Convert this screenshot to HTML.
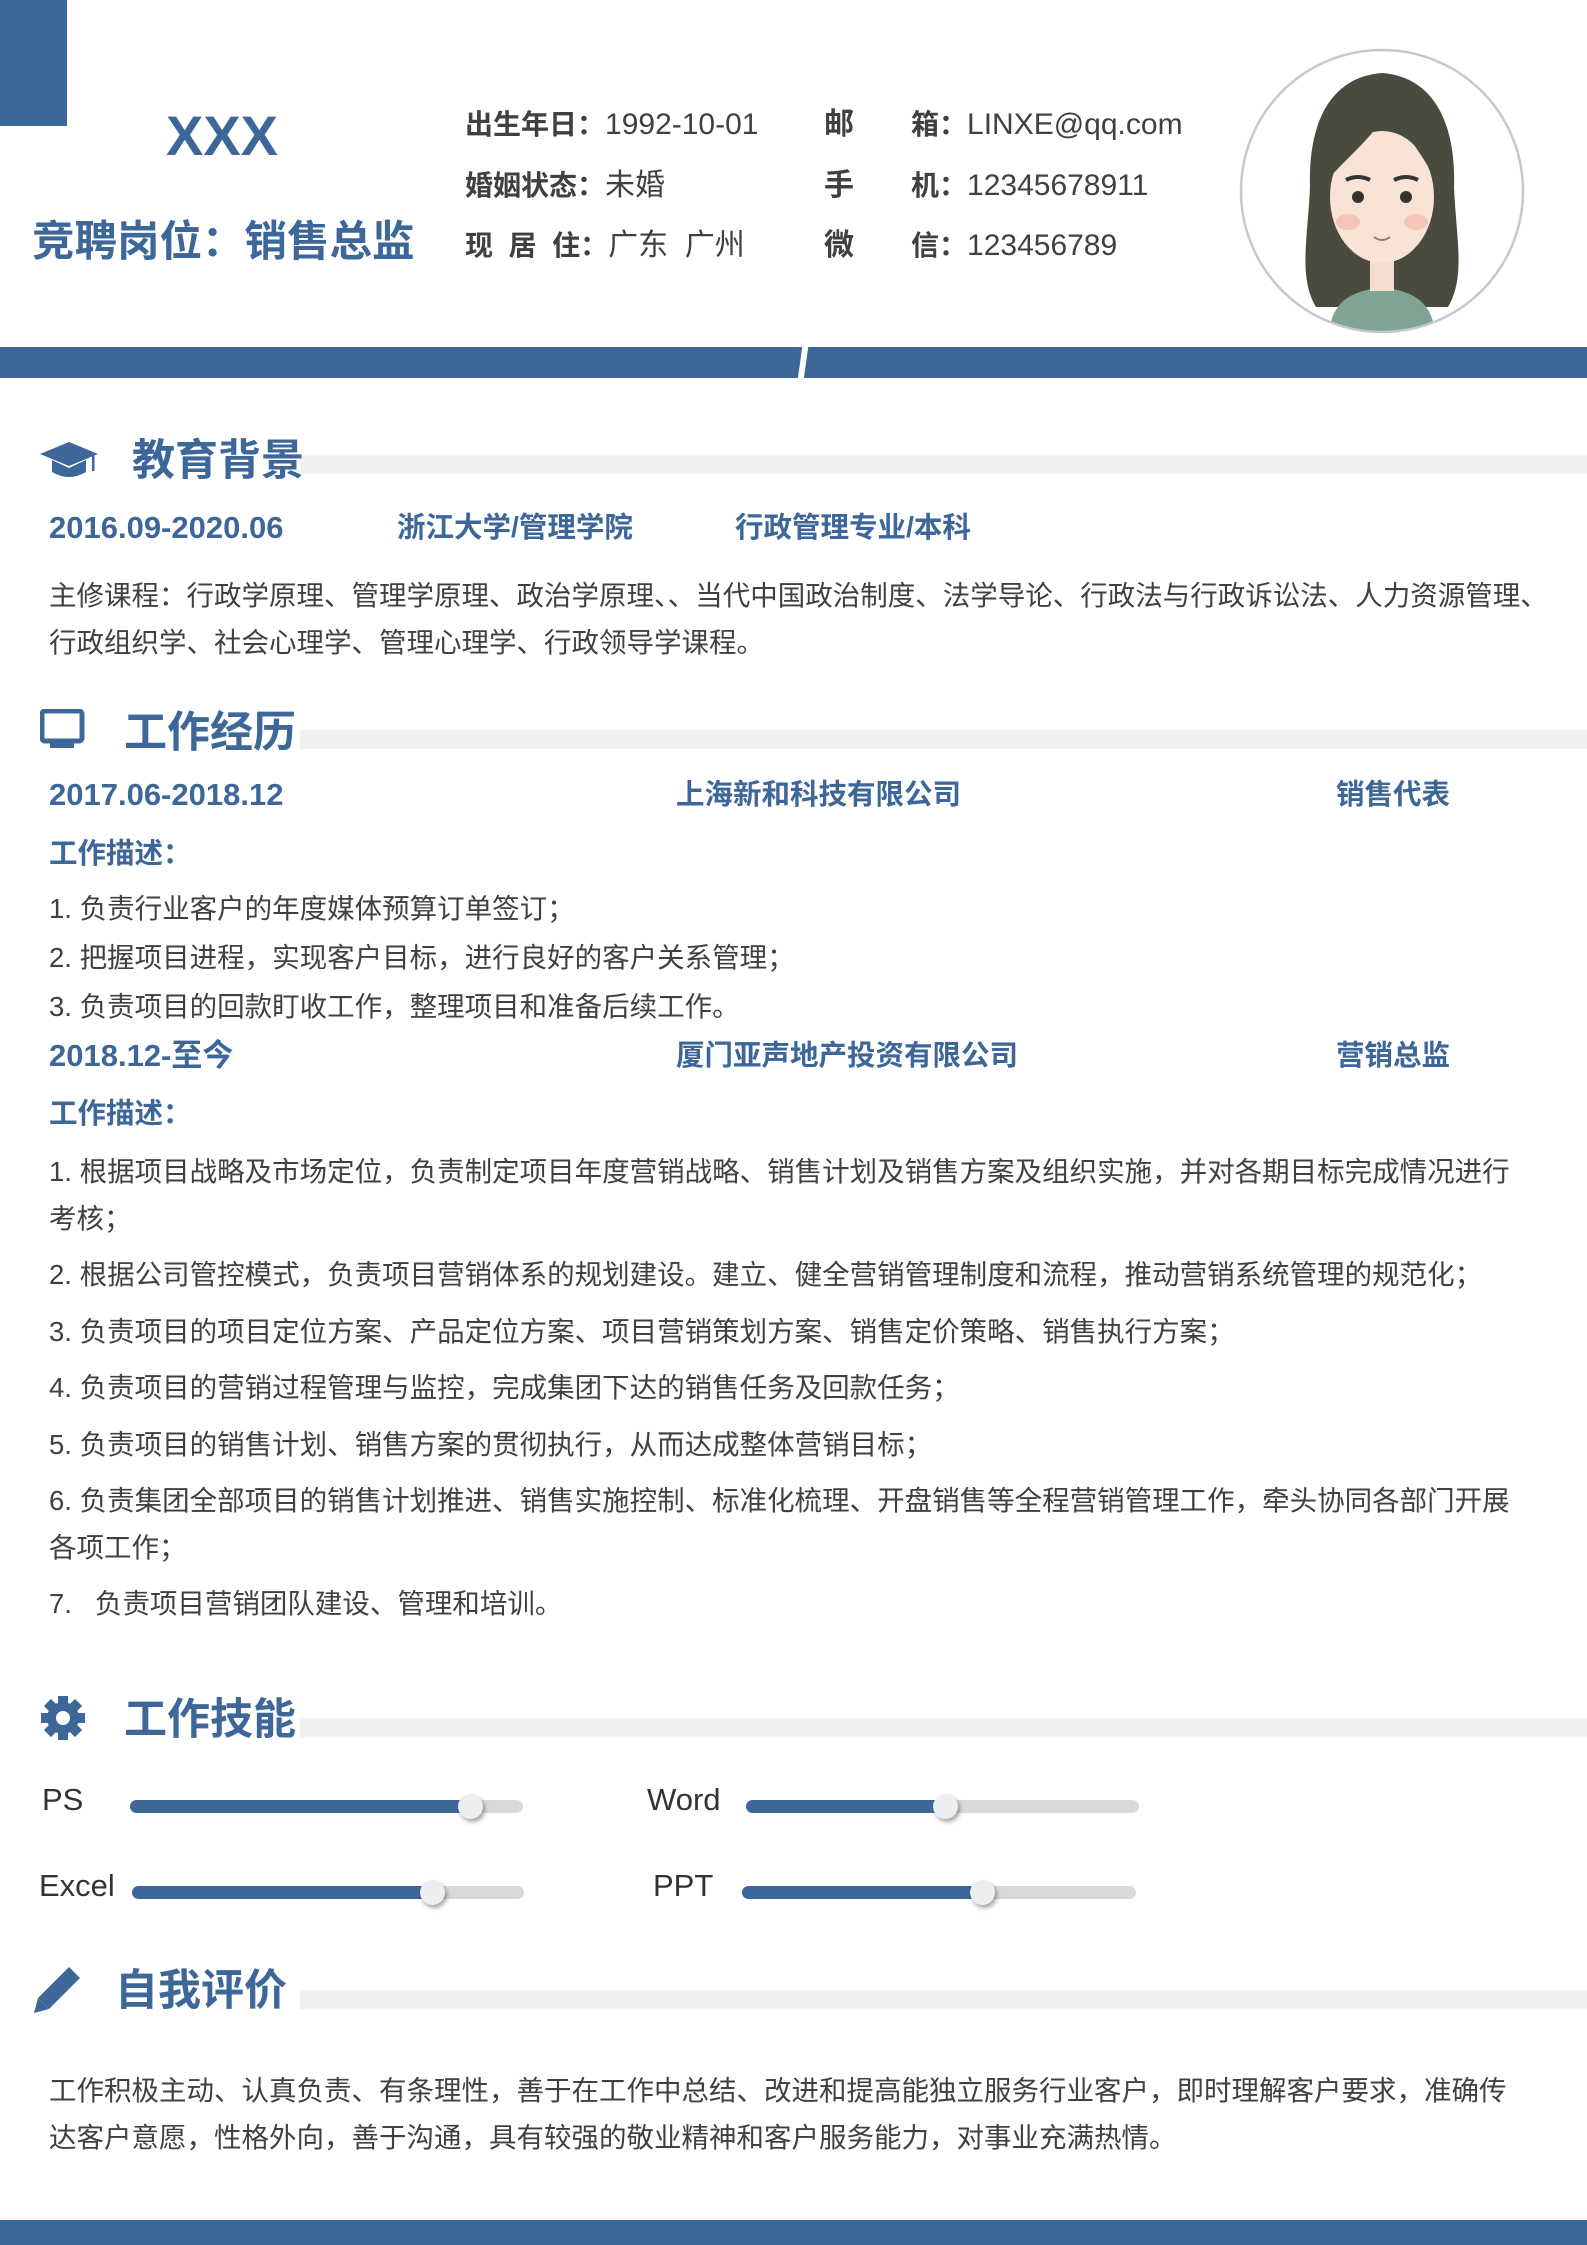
<!DOCTYPE html>
<html><head><meta charset="utf-8"><style>
*{margin:0;padding:0;box-sizing:border-box}
body{width:1587px;height:2245px;position:relative;background:#fff;font-family:"Liberation Sans","Noto Sans CJK SC",sans-serif;color:#404040;overflow:hidden}
.a{position:absolute;white-space:nowrap}
.b{color:#3e6799;font-weight:bold}
.lab{font-weight:bold;color:#404040;font-size:28px}
.info{font-size:30px;line-height:40px}
.ht{font-size:43px;line-height:56px;font-weight:bold;color:#3e6799}
.hb{position:absolute;left:300px;right:0;height:19px;background:#f0f0f0}
.row{font-size:28.5px;line-height:40px}
.d{font-size:31px}
.t{font-size:27.5px;line-height:40px}
.track{position:absolute;height:13px;border-radius:7px;background:#d9d9d9}
.fill{position:absolute;left:0;top:0;height:13px;border-radius:7px;background:#3e6799}
.knob{position:absolute;top:-6px;width:25px;height:25px;border-radius:50%;background:#eceef0;box-shadow:2px 3px 4px rgba(0,0,0,.35)}
.sk{font-size:31px;line-height:40px;color:#333}
</style></head><body>
<div class="a" style="left:0;top:0;width:67px;height:126px;background:#3e6799"></div>
<div class="a b" style="left:222px;top:106px;font-size:56px;line-height:60px;transform:translateX(-50%)">XXX</div>
<div class="a b" style="left:32px;top:218px;font-size:42.5px;line-height:50px">竞聘岗位：销售总监</div>

<div class="a info" style="left:465px;top:105px"><span class="lab">出生年日：</span>1992-10-01</div>
<div class="a info" style="left:465px;top:166px"><span class="lab">婚姻状态：</span>未婚</div>
<div class="a info" style="left:465px;top:226px"><span class="lab">现&nbsp;&nbsp;居&nbsp;&nbsp;住：</span>广东&nbsp;&nbsp;广州</div>
<div class="a info lab" style="left:824px;top:105px">邮</div>
<div class="a info lab" style="left:824px;top:166px">手</div>
<div class="a info lab" style="left:824px;top:226px">微</div>
<div class="a info" style="left:911px;top:105px"><span class="lab">箱：</span>LINXE@qq.com</div>
<div class="a info" style="left:911px;top:166px"><span class="lab">机：</span>12345678911</div>
<div class="a info" style="left:911px;top:226px"><span class="lab">信：</span>123456789</div>

<svg class="a" style="left:1238px;top:47px" width="288" height="288" viewBox="0 0 288 288">
<defs><clipPath id="c"><circle cx="144" cy="144" r="141"/></clipPath></defs>
<circle cx="144" cy="144" r="141" fill="#fff"/>
<g clip-path="url(#c)">
<path d="M144 26 C90 30 70 80 72 140 C70 190 60 230 78 260 L210 260 C228 230 218 190 216 140 C218 80 198 30 144 26Z" fill="#4a4a3e"/>
<path d="M90 300 C90 255 110 245 144 240 C178 245 198 255 198 300Z" fill="#7fa494"/>
<rect x="132" y="200" width="24" height="44" fill="#f5ddd0"/>
<ellipse cx="144" cy="150" rx="52" ry="66" fill="#f8e3d6"/>
<path d="M92 130 C100 80 130 62 150 60 C140 85 120 100 92 130Z" fill="#4a4a3e"/>
<path d="M196 130 C190 90 170 70 150 60 C165 85 180 100 196 130Z" fill="#4a4a3e"/>
<circle cx="120" cy="150" r="6" fill="#333"/><circle cx="168" cy="150" r="6" fill="#333"/>
<path d="M108 133 q12 -6 24 0 M156 133 q12 -6 24 0" stroke="#333" stroke-width="4" fill="none"/>
<ellipse cx="110" cy="175" rx="12" ry="8" fill="#f4b8b0" opacity=".7"/><ellipse cx="178" cy="175" rx="12" ry="8" fill="#f4b8b0" opacity=".7"/>
<path d="M136 190 q8 6 16 0" stroke="#b07060" stroke-width="2" fill="none"/>
</g>
<circle cx="144" cy="144" r="141" fill="none" stroke="#c8c8c8" stroke-width="2.5"/>
</svg>

<div class="a" style="left:0;top:347px;width:1587px;height:31px;background:#3e6799"></div>
<div class="a" style="left:800px;top:345px;width:6px;height:36px;background:#fff;transform:skewX(-8deg)"></div>

<div class="hb" style="top:455px"></div>
<svg class="a" style="left:40px;top:440px" width="58" height="40" viewBox="0 0 58 40"><path d="M29 2 L58 14 L29 26 L0 14Z" fill="#3e6799"/><path d="M12 20 L12 32 Q29 42 46 32 L46 20 L29 28Z" fill="#3e6799"/><rect x="52" y="15" width="2.5" height="16" fill="#3e6799"/></svg>
<div class="a ht" style="left:132px;top:433px">教育背景</div>
<div class="a b row d" style="left:49px;top:508px">2016.09-2020.06</div>
<div class="a b row" style="left:397px;top:508px">浙江大学/管理学院</div>
<div class="a b row" style="left:735px;top:508px">行政管理专业/本科</div>
<div class="a t" style="left:49px;top:576px">主修课程：行政学原理、管理学原理、政治学原理、、当代中国政治制度、法学导论、行政法与行政诉讼法、人力资源管理、</div>
<div class="a t" style="left:49px;top:623px">行政组织学、社会心理学、管理心理学、行政领导学课程。</div>

<div class="hb" style="top:730px"></div>
<svg class="a" style="left:40px;top:709px" width="46" height="42" viewBox="0 0 46 42"><rect x="2" y="2" width="40" height="30" rx="3" fill="none" stroke="#3e6799" stroke-width="5"/><rect x="10" y="34" width="24" height="5" fill="#3e6799"/></svg>
<div class="a ht" style="left:124px;top:705px">工作经历</div>
<div class="a b row d" style="left:49px;top:775px">2017.06-2018.12</div>
<div class="a b row" style="left:676px;top:775px">上海新和科技有限公司</div>
<div class="a b row" style="left:1336px;top:775px">销售代表</div>
<div class="a b row" style="left:49px;top:834px">工作描述：</div>
<div class="a t" style="left:49px;top:889px">1. 负责行业客户的年度媒体预算订单签订；</div>
<div class="a t" style="left:49px;top:938px">2. 把握项目进程，实现客户目标，进行良好的客户关系管理；</div>
<div class="a t" style="left:49px;top:987px">3. 负责项目的回款盯收工作，整理项目和准备后续工作。</div>
<div class="a b row d" style="left:49px;top:1036px">2018.12-至今</div>
<div class="a b row" style="left:676px;top:1036px">厦门亚声地产投资有限公司</div>
<div class="a b row" style="left:1336px;top:1036px">营销总监</div>
<div class="a b row" style="left:49px;top:1094px">工作描述：</div>
<div class="a t" style="left:49px;top:1152px">1. 根据项目战略及市场定位，负责制定项目年度营销战略、销售计划及销售方案及组织实施，并对各期目标完成情况进行</div>
<div class="a t" style="left:49px;top:1199px">考核；</div>
<div class="a t" style="left:49px;top:1255px">2. 根据公司管控模式，负责项目营销体系的规划建设。建立、健全营销管理制度和流程，推动营销系统管理的规范化；</div>
<div class="a t" style="left:49px;top:1312px">3. 负责项目的项目定位方案、产品定位方案、项目营销策划方案、销售定价策略、销售执行方案；</div>
<div class="a t" style="left:49px;top:1368px">4. 负责项目的营销过程管理与监控，完成集团下达的销售任务及回款任务；</div>
<div class="a t" style="left:49px;top:1425px">5. 负责项目的销售计划、销售方案的贯彻执行，从而达成整体营销目标；</div>
<div class="a t" style="left:49px;top:1481px">6. 负责集团全部项目的销售计划推进、销售实施控制、标准化梳理、开盘销售等全程营销管理工作，牵头协同各部门开展</div>
<div class="a t" style="left:49px;top:1528px">各项工作；</div>
<div class="a t" style="left:49px;top:1584px">7.&nbsp;&nbsp;&nbsp;负责项目营销团队建设、管理和培训。</div>

<div class="hb" style="top:1718px"></div>
<svg class="a" style="left:40px;top:1695px" width="46" height="46" viewBox="0 0 46 46"><g fill="#3e6799" transform="translate(23 23)"><rect x="-5" y="-22" width="10" height="44"/><rect x="-5" y="-22" width="10" height="44" transform="rotate(45)"/><rect x="-5" y="-22" width="10" height="44" transform="rotate(90)"/><rect x="-5" y="-22" width="10" height="44" transform="rotate(135)"/><circle r="16"/></g><circle cx="23" cy="23" r="7" fill="#fff"/></svg>
<div class="a ht" style="left:124px;top:1692px">工作技能</div>
<div class="a sk" style="left:42px;top:1780px">PS</div>
<div class="track" style="left:130px;top:1800px;width:393px"><div class="fill" style="width:340px"></div><div class="knob" style="left:328px"></div></div>
<div class="a sk" style="left:647px;top:1780px">Word</div>
<div class="track" style="left:746px;top:1800px;width:393px"><div class="fill" style="width:200px"></div><div class="knob" style="left:187px"></div></div>
<div class="a sk" style="left:39px;top:1866px">Excel</div>
<div class="track" style="left:132px;top:1886px;width:392px"><div class="fill" style="width:300px"></div><div class="knob" style="left:288px"></div></div>
<div class="a sk" style="left:653px;top:1866px">PPT</div>
<div class="track" style="left:742px;top:1886px;width:394px"><div class="fill" style="width:240px"></div><div class="knob" style="left:228px"></div></div>

<div class="hb" style="top:1990px"></div>
<svg class="a" style="left:33px;top:1965px" width="50" height="50" viewBox="0 0 50 50"><path d="M36 2 L47 13 L16 44 L5 33Z" fill="#3e6799"/><path d="M5 33 L16 44 L1 48Z" fill="#3e6799"/></svg>
<div class="a ht" style="left:115px;top:1963px">自我评价</div>
<div class="a t" style="left:49px;top:2071px">工作积极主动、认真负责、有条理性，善于在工作中总结、改进和提高能独立服务行业客户，即时理解客户要求，准确传</div>
<div class="a t" style="left:49px;top:2118px">达客户意愿，性格外向，善于沟通，具有较强的敬业精神和客户服务能力，对事业充满热情。</div>

<div class="a" style="left:0;top:2220px;width:1587px;height:25px;background:#3e6799"></div>
</body></html>
